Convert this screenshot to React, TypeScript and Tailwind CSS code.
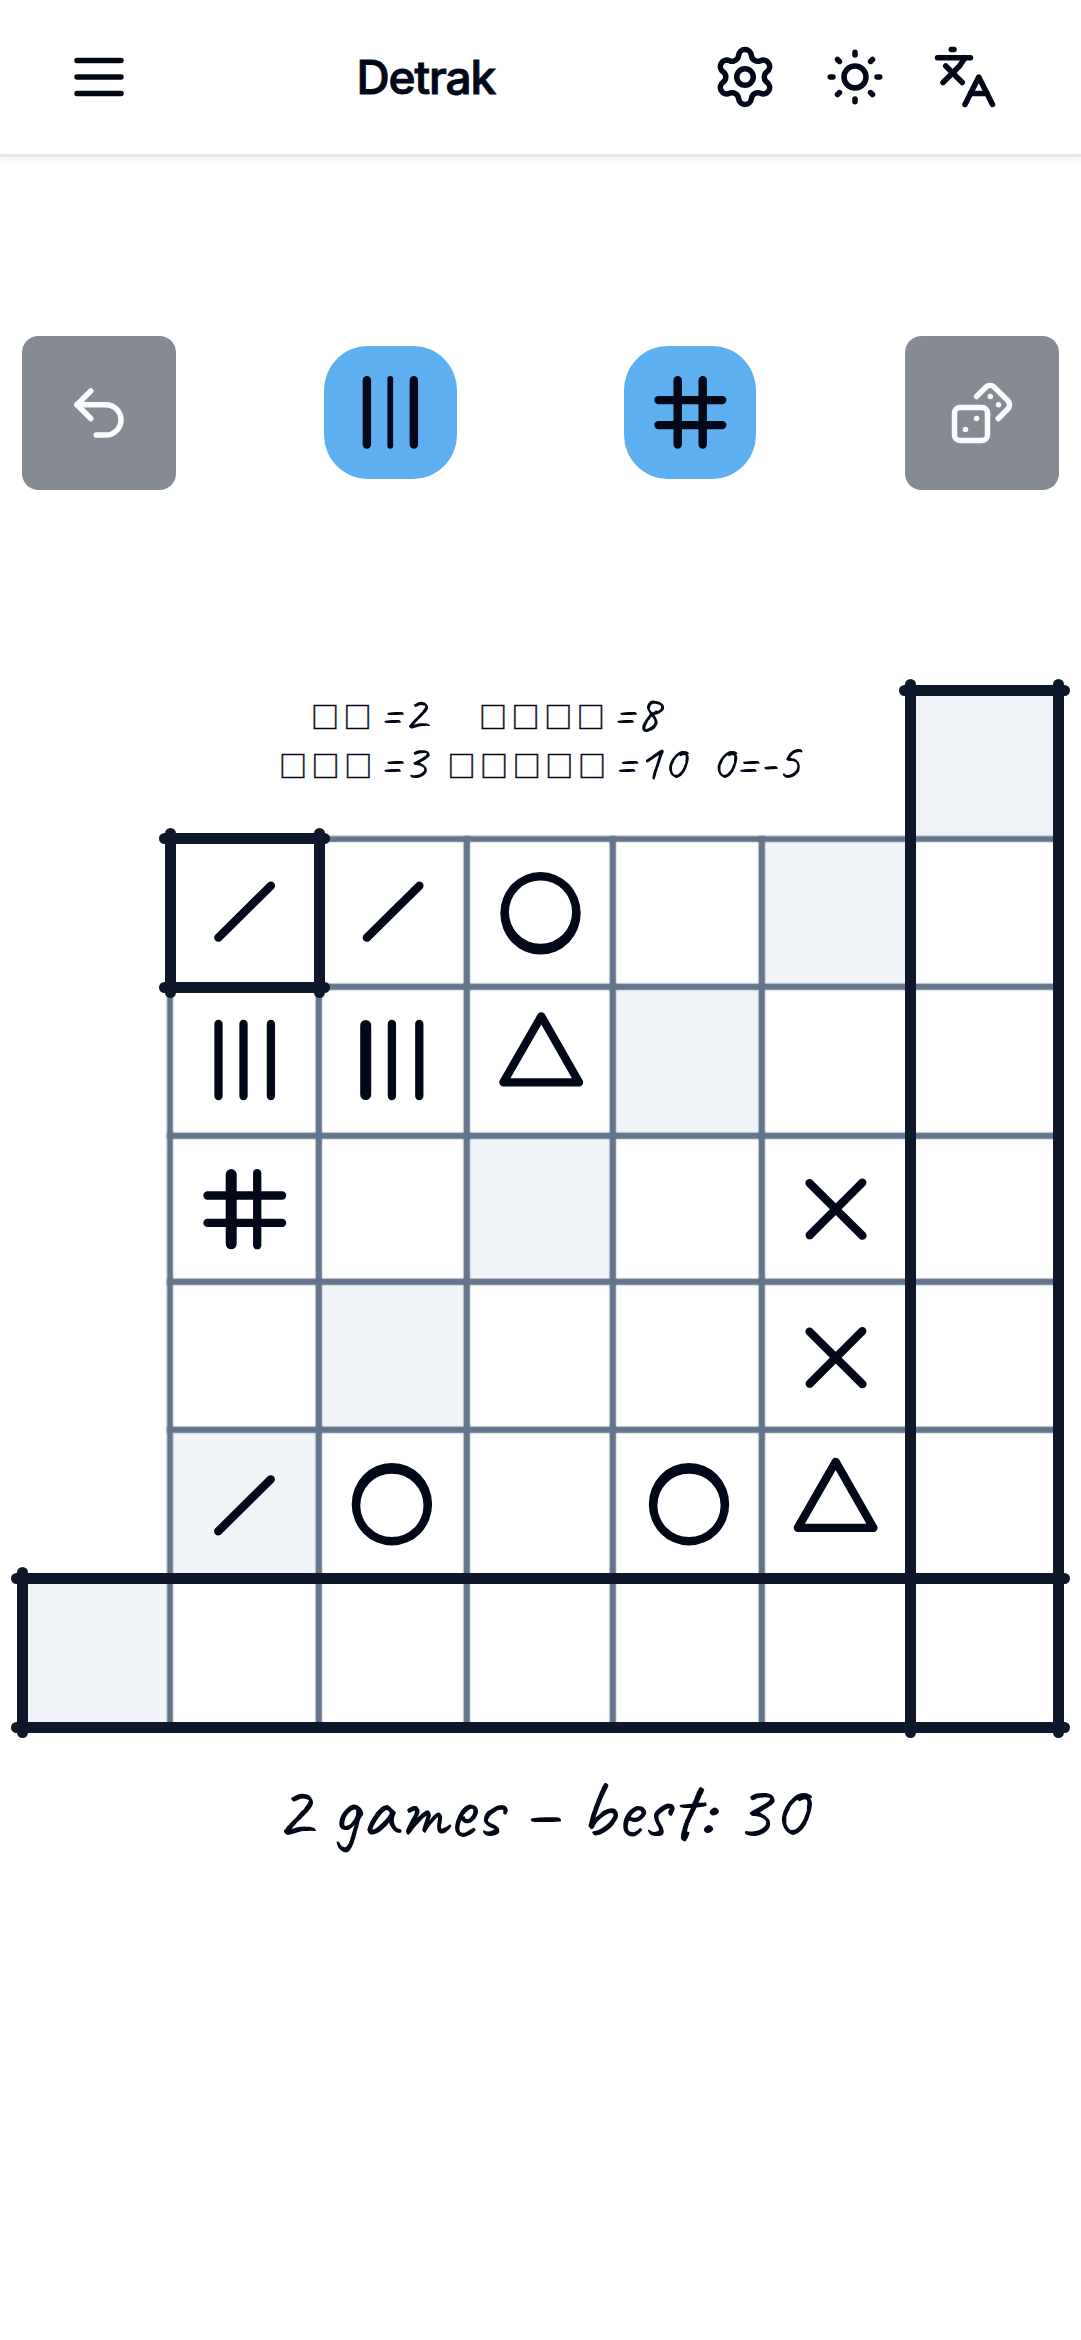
import React from "react";
import { Settings, SunMedium, Languages, Undo2, Dices } from "lucide-react";

const INK = "#020817";

// Board grid lines, relative to the board's top-left corner.
const COLS = [0, 148, 297, 445, 591, 739.5, 888, 1036.5];
const ROWS = [0, 148.5, 297, 445.5, 591.5, 740, 888.5, 1037];

type GlyphProps = { x: number; y: number; heavy?: boolean; flip?: boolean };

function Slash({ x, y }: GlyphProps) {
  return <path d={`M${x - 26.3} ${y + 26}L${x + 26.3} ${y - 26}`} strokeWidth="8.3" />;
}

function Cross({ x, y }: GlyphProps) {
  return (
    <path
      d={`M${x - 26.5} ${y - 26.2}l53 52.6M${x + 26.3} ${y - 26.7}l-52.6 52.6`}
      strokeWidth="8.3"
    />
  );
}

function Bars({ x, y, heavy }: GlyphProps) {
  const r = heavy ? 34.6 : 36;
  return (
    <>
      <path d={`M${x - (heavy ? 27.2 : 26)} ${y - r}v${2 * r}`} strokeWidth={heavy ? 11 : 8.3} />
      <path d={`M${x - 1} ${y - 36}v72M${x + 26.4} ${y - 36}v72`} strokeWidth="8.3" />
    </>
  );
}

function Hash({ x, y }: GlyphProps) {
  return (
    <>
      <path d={`M${x - 13.7} ${y - 34.6}v69.2`} strokeWidth="11" />
      <path d={`M${x + 12.3} ${y - 36}v72`} strokeWidth="8.3" />
      <path d={`M${x - 37.4} ${y - 13.7}h74.6M${x - 37.4} ${y + 13.7}h74.6`} strokeWidth="8.3" />
    </>
  );
}

function Ring({ x, y, flip }: GlyphProps) {
  const s = flip ? 1.2 : -1.2;
  return (
    <path
      fill={INK}
      stroke="none"
      fillRule="evenodd"
      d={`M${x - 40.2} ${y}a40.2 41.3 0 1 1 80.4 0a40.2 41.3 0 1 1 -80.4 0Z M${x - 31.6} ${y + s}a31.6 31.7 0 1 1 63.2 0a31.6 31.7 0 1 1 -63.2 0Z`}
    />
  );
}

function Triangle({ x, y }: GlyphProps) {
  return <path d={`M${x} ${y - 33}l37.7 66h-75.6Z`} strokeWidth="8.3" />;
}

type Mark = { glyph: React.FC<GlyphProps> } & GlyphProps;

const MARKS: Record<string, Mark> = {
  "1-1": { glyph: Slash, x: 222.6, y: 221.2 },
  "1-2": { glyph: Slash, x: 371.1, y: 221.2 },
  "1-3": { glyph: Ring, x: 518.5, y: 222.8 },
  "2-1": { glyph: Bars, x: 222.5, y: 370 },
  "2-2": { glyph: Bars, x: 370.9, y: 370, heavy: true },
  "2-3": { glyph: Triangle, x: 519.3, y: 359.3 },
  "3-1": { glyph: Hash, x: 222.9, y: 518.7 },
  "3-5": { glyph: Cross, x: 813.5, y: 518.8 },
  "4-5": { glyph: Cross, x: 813.5, y: 667.3 },
  "5-1": { glyph: Slash, x: 222.5, y: 815.3 },
  "5-2": { glyph: Ring, x: 369.9, y: 814.2, flip: true },
  "5-4": { glyph: Ring, x: 667, y: 814.2, flip: true },
  "5-5": { glyph: Triangle, x: 813.2, y: 804.8 },
};

function Cell({ row, col }: { row: number; col: number }) {
  const mark = MARKS[`${row}-${col}`];
  const diagonal = row + col === 6;
  const corner = diagonal && (row === 0 || row === 6);
  const x = COLS[col];
  const y = ROWS[row];
  return (
    <div
      className={
        (diagonal ? "bg-[#f0f4f9] " : "bg-white ") +
        (corner ? "" : "shadow-[0_0_1.5px_3px_#64748b,inset_0_0_1.5px_3px_#64748b]")
      }
    >
      {mark && (
        <svg
          className="block size-full"
          viewBox={`${x} ${y} ${COLS[col + 1] - x} ${ROWS[row + 1] - y}`}
          fill="none"
          stroke={INK}
          strokeLinecap="round"
          strokeLinejoin="round"
        >
          <mark.glyph {...mark} />
        </svg>
      )}
    </div>
  );
}

function Boxes({ n, className }: { n: number; className: string }) {
  return (
    <span className={"pt-[4px] font-['Noto_Sans_CJK_JP',sans-serif] text-[28px] leading-[40px] tracking-[4.6px] [-webkit-text-stroke:0.5px_#020817] " + className}>
      {"□".repeat(n)}
    </span>
  );
}

function Legend() {
  const hand = "pb-[4px] font-['Caveat',cursive] text-[54px] font-medium leading-[44px]";
  return (
    <div className="col-span-6 -mt-px text-[#020817]">
      <div className="flex h-[49px] items-center whitespace-nowrap pl-[289px]">
        <Boxes n={2} className="w-[67.5px]" />
        <span className={hand + " w-[100.5px]"}>=2</span>
        <Boxes n={4} className="w-[132.5px]" />
        <span className={hand}>=8</span>
      </div>
      <div className="flex h-[49px] items-center whitespace-nowrap pl-[257px]">
        <Boxes n={3} className="w-[99.5px]" />
        <span className={hand + " w-[69px]"}>=3</span>
        <Boxes n={5} className="w-[165.5px]" />
        <span className={hand + " w-[97px]"}>=10</span>
        <span className={hand}>0=-5</span>
      </div>
    </div>
  );
}

function Board() {
  const rows = [1, 2, 3, 4, 5];
  const stroke = "absolute rounded-full bg-[#0f172a] ";
  return (
    <div className="relative ml-[22px] mt-[200.5px] grid h-[1037px] w-[1036.5px] grid-cols-[148px_149px_148px_146px_148.5px_148.5px_148.5px] grid-rows-[148.5px_148.5px_148.5px_146px_148.5px_148.5px_148.5px]">
      <Legend />
      <Cell row={0} col={6} />
      {rows.map((r) => (
        <React.Fragment key={r}>
          <div />
          {[1, 2, 3, 4, 5, 6].map((c) => (
            <Cell key={c} row={r} col={c} />
          ))}
        </React.Fragment>
      ))}
      {[0, 1, 2, 3, 4, 5, 6].map((c) => (
        <Cell key={c} row={6} col={c} />
      ))}

      {/* score column */}
      <i className={stroke + "left-[877px] top-[-5px] h-[11px] w-[171px]"} />
      <i className={stroke + "left-[883px] top-[-11px] h-[1059px] w-[11px]"} />
      <i className={stroke + "left-[1031px] top-[-11px] h-[1059px] w-[11px]"} />
      {/* score row */}
      <i className={stroke + "left-[-11px] top-[883px] h-[11px] w-[1059px]"} />
      <i className={stroke + "left-[-11px] top-[1031.5px] h-[11px] w-[1059px]"} />
      <i className={stroke + "left-[-5.5px] top-[877px] h-[171px] w-[11px]"} />
      {/* selected cell */}
      <i className={stroke + "left-[137px] top-[143px] h-[11px] w-[171px]"} />
      <i className={stroke + "left-[137px] top-[291.5px] h-[11px] w-[171px]"} />
      <i className={stroke + "left-[143px] top-[138px] h-[170px] w-[11px]"} />
      <i className={stroke + "left-[291.5px] top-[138px] h-[170px] w-[11px]"} />
    </div>
  );
}

function MenuIcon() {
  return (
    <svg viewBox="0 0 24 24" className="size-[66px]" fill="none" stroke="currentColor" strokeWidth="2" strokeLinecap="round">
      <path d="M4 6h16M4 12h16M4 18h16" />
    </svg>
  );
}

export default function App() {
  const die = "flex h-[132.5px] w-[132.5px] items-center justify-center rounded-[44px] bg-[#5eaff0]";
  const action = "flex size-[154px] items-center justify-center rounded-[16.5px] bg-[#868a93] text-[#fafbfd]";
  return (
    <div className="h-[2340px] w-[1081px] overflow-hidden bg-white text-[#020817]">
      <header className="flex h-[157px] items-center border-b-3 border-[#e2e8f0] pl-[66px] pr-[83px] shadow-[0_3px_6px_rgba(0,0,0,0.05)]">
        <MenuIcon />
        <h1 className="ml-[224.5px] font-['Inter',sans-serif] text-[46px] font-medium leading-none tracking-[-1.1px] [-webkit-text-stroke:1px_#020817]">
          Detrak
        </h1>
        <div className="ml-auto flex gap-[44px]">
          <Settings size={66} />
          <SunMedium size={66} />
          <Languages size={66} />
        </div>
      </header>

      <div className="mt-[178.5px] flex h-[154px] items-center justify-between pl-[22px] pr-[22.5px]">
        <button className={action}>
          <Undo2 size={66} />
        </button>
        <div className="flex gap-[167px]">
          <div className={die}>
            <svg viewBox="0 0 132 132" className="size-full" stroke={INK} fill="none" strokeLinecap="round">
              <path d="M42.7 34.2v64M89.5 34.2v64" strokeWidth="8.4" />
              <path d="M66 32.8v66.6" strokeWidth="5.7" />
            </svg>
          </div>
          <div className={die}>
            <svg viewBox="0 0 132 132" className="size-full" stroke={INK} fill="none" strokeLinecap="round">
              <path d="M53.5 34.2v64M78.4 34.2v64M34.4 53.9h63.4M34.4 78.8h63.4" strokeWidth="8.4" />
            </svg>
          </div>
        </div>
        <button className={action}>
          <Dices size={66} />
        </button>
      </div>

      <Board />

      <p className="mt-[38px] pl-[274px] font-['Caveat',cursive] text-[82.5px] font-medium leading-[90px] whitespace-nowrap">
        2 games – best: 30
      </p>
    </div>
  );
}
